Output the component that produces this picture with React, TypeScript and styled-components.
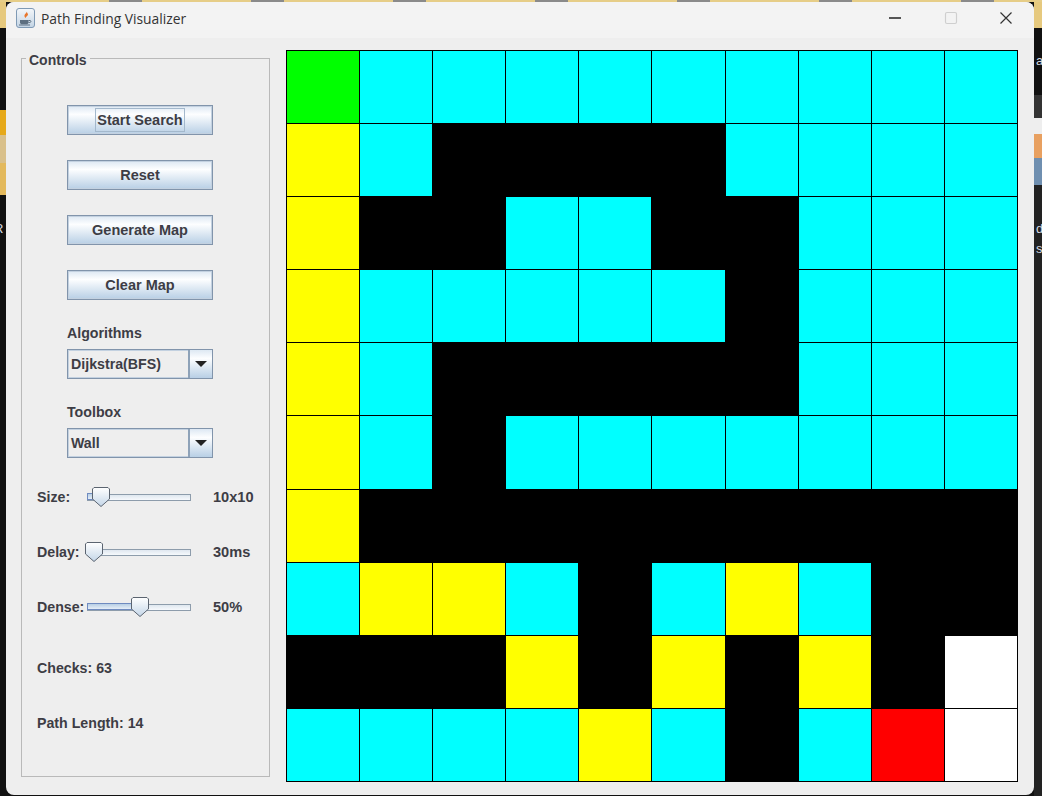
import React, { useId } from 'react';
import styled, { createGlobalStyle } from 'styled-components';

const GlobalStyle = createGlobalStyle`
  html, body {
    margin: 0;
    padding: 0;
    overflow: hidden;
    background: #111;
  }
  * {
    box-sizing: border-box;
  }
`;

const Desktop = styled.div`
  position: relative;
  display: flex;
  width: 1042px;
  height: 796px;
  padding: 2px 8px 1px 6px;
  overflow: hidden;
  background:
    repeating-linear-gradient(90deg, #e6cd87 0 109px, #8a8a8a 109px 142px) top left / 100% 2px no-repeat,
    linear-gradient(180deg, #e6c97e 0 28px, #111 28px 110px, #e6a91a 110px 135px, #d9c08a 135px 163px, #e3b95c 163px 195px, #111 195px) top left / 6px 100% no-repeat,
    linear-gradient(180deg, #e6c97e 0 28px, #111 28px 95px, #333 95px 118px, #eeeeee 118px 134px, #e8a060 134px 158px, #6f8fb0 158px 185px, #222 185px) top right / 8px 100% no-repeat,
    #111;
`;

const BackdropGlyph = styled.span<{ $top: number; $left: number }>`
  position: absolute;
  top: ${(p) => p.$top}px;
  left: ${(p) => p.$left}px;
  color: #d5dbe3;
  font: 13px 'Liberation Sans', Arial, sans-serif;
`;

const Window = styled.div`
  display: flex;
  flex-direction: column;
  flex: 1;
  background: #eeeeee;
  border-radius: 8px;
  overflow: hidden;
`;

const TitleBar = styled.div`
  display: flex;
  align-items: center;
  height: 36px;
  padding: 0 0 4px 10px;
  background: #f3f3f3;
`;

const AppIcon = styled.svg`
  width: 19px;
  height: 20px;
  flex: none;
`;

const Title = styled.span`
  flex: 1;
  margin-left: 6px;
  color: #333;
  font: 13.85px 'Open Sans', 'Noto Sans', sans-serif;
`;

const WindowButton = styled.div`
  display: flex;
  align-items: center;
  justify-content: center;
  width: 55.5px;
  height: 32px;
`;

const Content = styled.div`
  display: flex;
  align-items: flex-start;
  gap: 16px;
  padding: 12px 0 0 15px;
`;

const Panel = styled.fieldset`
  width: 249px;
  height: 727px;
  margin: 0;
  padding: 0;
  border: 1px solid #b9b9b9;
  font: bold 14.2px 'Liberation Sans', Arial, sans-serif;
  color: #3d3d45;
`;

const PanelTitle = styled.legend`
  margin-left: 4px;
  padding: 0 3px;
  height: 16px;
  line-height: 20px;
  font-size: 14px;
`;

const PanelBody = styled.div`
  padding-left: 15px;
`;

const ControlColumn = styled.div`
  display: flex;
  flex-direction: column;
  gap: 25px;
  width: 146px;
  padding-top: 39px;
  margin-left: 30px;
`;

const MetalButton = styled.div`
  display: flex;
  align-items: center;
  justify-content: center;
  height: 30px;
  border: 1px solid #8194ab;
  box-shadow: inset 0 0 0 1px #c3d1e0;
  background: linear-gradient(180deg, #dde8f3 0%, #fdfeff 30%, #b8cfe5 100%);
  font-size: 14.5px;
  line-height: 16px;
`;

const FocusRing = styled.span`
  padding: 3px 1px;
  border: 1px solid #a3b8cc;
`;

const Field = styled.div`
  display: flex;
  flex-direction: column;
  gap: 8px;
`;

const FieldLabel = styled.div`
  height: 16px;
  line-height: 16px;
`;

const Combo = styled.div`
  display: flex;
  height: 30px;
  border: 1px solid #8194ab;
  box-shadow: inset 0 0 0 1px #c3d1e0;
`;

const ComboValue = styled.div`
  flex: 1;
  padding-left: 3px;
  line-height: 28px;
`;

const ComboArrow = styled.div`
  display: flex;
  align-items: center;
  justify-content: center;
  width: 24px;
  border-left: 2px solid #8ea2b8;
  background: linear-gradient(180deg, #dde8f3 0%, #fdfeff 30%, #b8cfe5 100%);

  &::after {
    content: '';
    border-top: 6px solid #222;
    border-left: 6px solid transparent;
    border-right: 6px solid transparent;
  }
`;

const SliderColumn = styled.div`
  display: flex;
  flex-direction: column;
  gap: 35px;
  margin-top: 29px;
`;

const SliderRow = styled.div`
  display: flex;
  align-items: center;
  height: 20px;
`;

const SliderLabel = styled.div`
  width: 50px;
`;

const SliderBox = styled.div`
  position: relative;
  display: flex;
  align-items: center;
  width: 104px;
  height: 20px;
`;

const Track = styled.div`
  flex: 1;
  height: 7px;
  border: 1px solid #8d9cab;
  background: linear-gradient(180deg, #dfe7ef, #f6f9fc);
`;

const TrackFill = styled.div<{ $width: number }>`
  position: absolute;
  top: 6px;
  left: 0;
  width: ${(p) => p.$width}px;
  height: 7px;
  border: 1px solid #6f8bc0;
  background: linear-gradient(180deg, #b8cfe5, #e6eef7);
`;

const Thumb = styled.svg<{ $left: number }>`
  position: absolute;
  top: 0;
  left: ${(p) => p.$left}px;
  width: 18px;
  height: 20px;
`;

const SliderValue = styled.div`
  margin-left: 22px;
  font-size: 14.6px;
`;

const StatColumn = styled.div`
  display: flex;
  flex-direction: column;
  gap: 39px;
  margin-top: 43px;
`;

const Stat = styled.div`
  height: 16px;
  line-height: 16px;
`;

const Board = styled.div`
  display: grid;
  grid-template-columns: repeat(10, 72.1px);
  grid-auto-rows: 72.1px;
  gap: 1px;
  padding: 1px;
  background: #000;
`;

const CELL_COLORS: Record<string, string> = {
  G: '#00ff00',
  C: '#00ffff',
  Y: '#ffff00',
  B: '#000000',
  W: '#ffffff',
  R: '#ff0000',
};

const Cell = styled.div<{ $kind: string }>`
  background: ${(p) => CELL_COLORS[p.$kind]};
`;

const BOARD = [
  'GCCCCCCCCC',
  'YCBBBBCCCC',
  'YBBCCBBCCC',
  'YCCCCCBCCC',
  'YCBBBBBCCC',
  'YCBCCCCCCC',
  'YBBBBBBBBB',
  'CYYCBCYCBB',
  'BBBYBYBYBW',
  'CCCCYCBCRW',
];

const SLIDERS = [
  { label: 'Size:', value: '10x10', left: 5, fill: 8 },
  { label: 'Delay:', value: '30ms', left: -2, fill: 0 },
  { label: 'Dense:', value: '50%', left: 44, fill: 50 },
];

const JavaIcon = () => (
  <AppIcon viewBox="0 0 19 20">
    <defs>
      <linearGradient id="app-icon-bg" x1="0" y1="0" x2="0" y2="1">
        <stop offset="0" stopColor="#f4f7fa" />
        <stop offset="1" stopColor="#c3d4e4" />
      </linearGradient>
    </defs>
    <rect x="0.5" y="0.5" width="18" height="19" rx="2.5" fill="url(#app-icon-bg)" stroke="#7f9ab5" />
    <path d="M10.5 3c1 2-2.5 3-2 5.200.2 1 1 1.500 1.300 2-.2-1.500 3-2.600 2-4.400-.4-.8-1-1.400-1.300-2.800z" fill="#e8762d" />
    <path d="M4 12h8.500v2.500c0 1.200-1 1.800-2 1.800H6c-1 0-2-.6-2-1.800z" fill="#5d6f80" />
    <path d="M12.500 12.500h1.500c1.200 0 1.200 2-.2 2h-1.300" fill="none" stroke="#5d6f80" />
    <path d="M3 17h11" stroke="#5d6f80" />
  </AppIcon>
);

const SliderThumb = ({ left }: { left: number }) => {
  const id = useId();
  return (
    <Thumb $left={left} viewBox="0 0 18 20">
      <defs>
        <linearGradient id={id} x1="0" y1="0" x2="0" y2="1">
          <stop offset="0" stopColor="#ffffff" />
          <stop offset="1" stopColor="#c4d6e8" />
        </linearGradient>
      </defs>
      <path d="M2 .5h14l1.500 1.500v10L9 19.500.5 12V2z" fill={`url(#${id})`} stroke="#5b6470" />
    </Thumb>
  );
};

const App = (): React.ReactElement => {
  return (
    <Desktop>
      <GlobalStyle />
      <BackdropGlyph $top={221} $left={-6}>R</BackdropGlyph>
      <BackdropGlyph $top={53} $left={1036}>a</BackdropGlyph>
      <BackdropGlyph $top={221} $left={1036}>d</BackdropGlyph>
      <BackdropGlyph $top={241} $left={1036}>s</BackdropGlyph>
      <Window>
        <TitleBar>
          <JavaIcon />
          <Title>Path Finding Visualizer</Title>
          <WindowButton>
            <svg width="14" height="14" viewBox="0 0 14 14">
              <path d="M1 7h12" stroke="#222" strokeWidth="1.300" />
            </svg>
          </WindowButton>
          <WindowButton>
            <svg width="14" height="14" viewBox="0 0 14 14">
              <rect x="1.500" y="1.500" width="11" height="11" rx="1.500" fill="none" stroke="#cfcfcf" strokeWidth="1.200" />
            </svg>
          </WindowButton>
          <WindowButton>
            <svg width="14" height="14" viewBox="0 0 14 14">
              <path d="M1.500 1.500l11 11M12.500 1.500l-11 11" stroke="#333" strokeWidth="1.200" />
            </svg>
          </WindowButton>
        </TitleBar>
        <Content>
          <Panel>
            <PanelTitle>Controls</PanelTitle>
            <PanelBody>
              <ControlColumn>
                <MetalButton>
                  <FocusRing>Start Search</FocusRing>
                </MetalButton>
                <MetalButton>Reset</MetalButton>
                <MetalButton>Generate Map</MetalButton>
                <MetalButton>Clear Map</MetalButton>
                <Field>
                  <FieldLabel>Algorithms</FieldLabel>
                  <Combo>
                    <ComboValue>Dijkstra(BFS)</ComboValue>
                    <ComboArrow />
                  </Combo>
                </Field>
                <Field>
                  <FieldLabel>Toolbox</FieldLabel>
                  <Combo>
                    <ComboValue>Wall</ComboValue>
                    <ComboArrow />
                  </Combo>
                </Field>
              </ControlColumn>
              <SliderColumn>
                {SLIDERS.map((s) => (
                  <SliderRow key={s.label}>
                    <SliderLabel>{s.label}</SliderLabel>
                    <SliderBox>
                      <Track />
                      {s.fill > 0 && <TrackFill $width={s.fill} />}
                      <SliderThumb left={s.left} />
                    </SliderBox>
                    <SliderValue>{s.value}</SliderValue>
                  </SliderRow>
                ))}
              </SliderColumn>
              <StatColumn>
                <Stat>Checks: 63</Stat>
                <Stat>Path Length: 14</Stat>
              </StatColumn>
            </PanelBody>
          </Panel>
          <Board>
            {BOARD.flatMap((row, y) =>
              row.split('').map((kind, x) => <Cell key={`${x}-${y}`} $kind={kind} />),
            )}
          </Board>
        </Content>
      </Window>
    </Desktop>
  );
};

export default App;
